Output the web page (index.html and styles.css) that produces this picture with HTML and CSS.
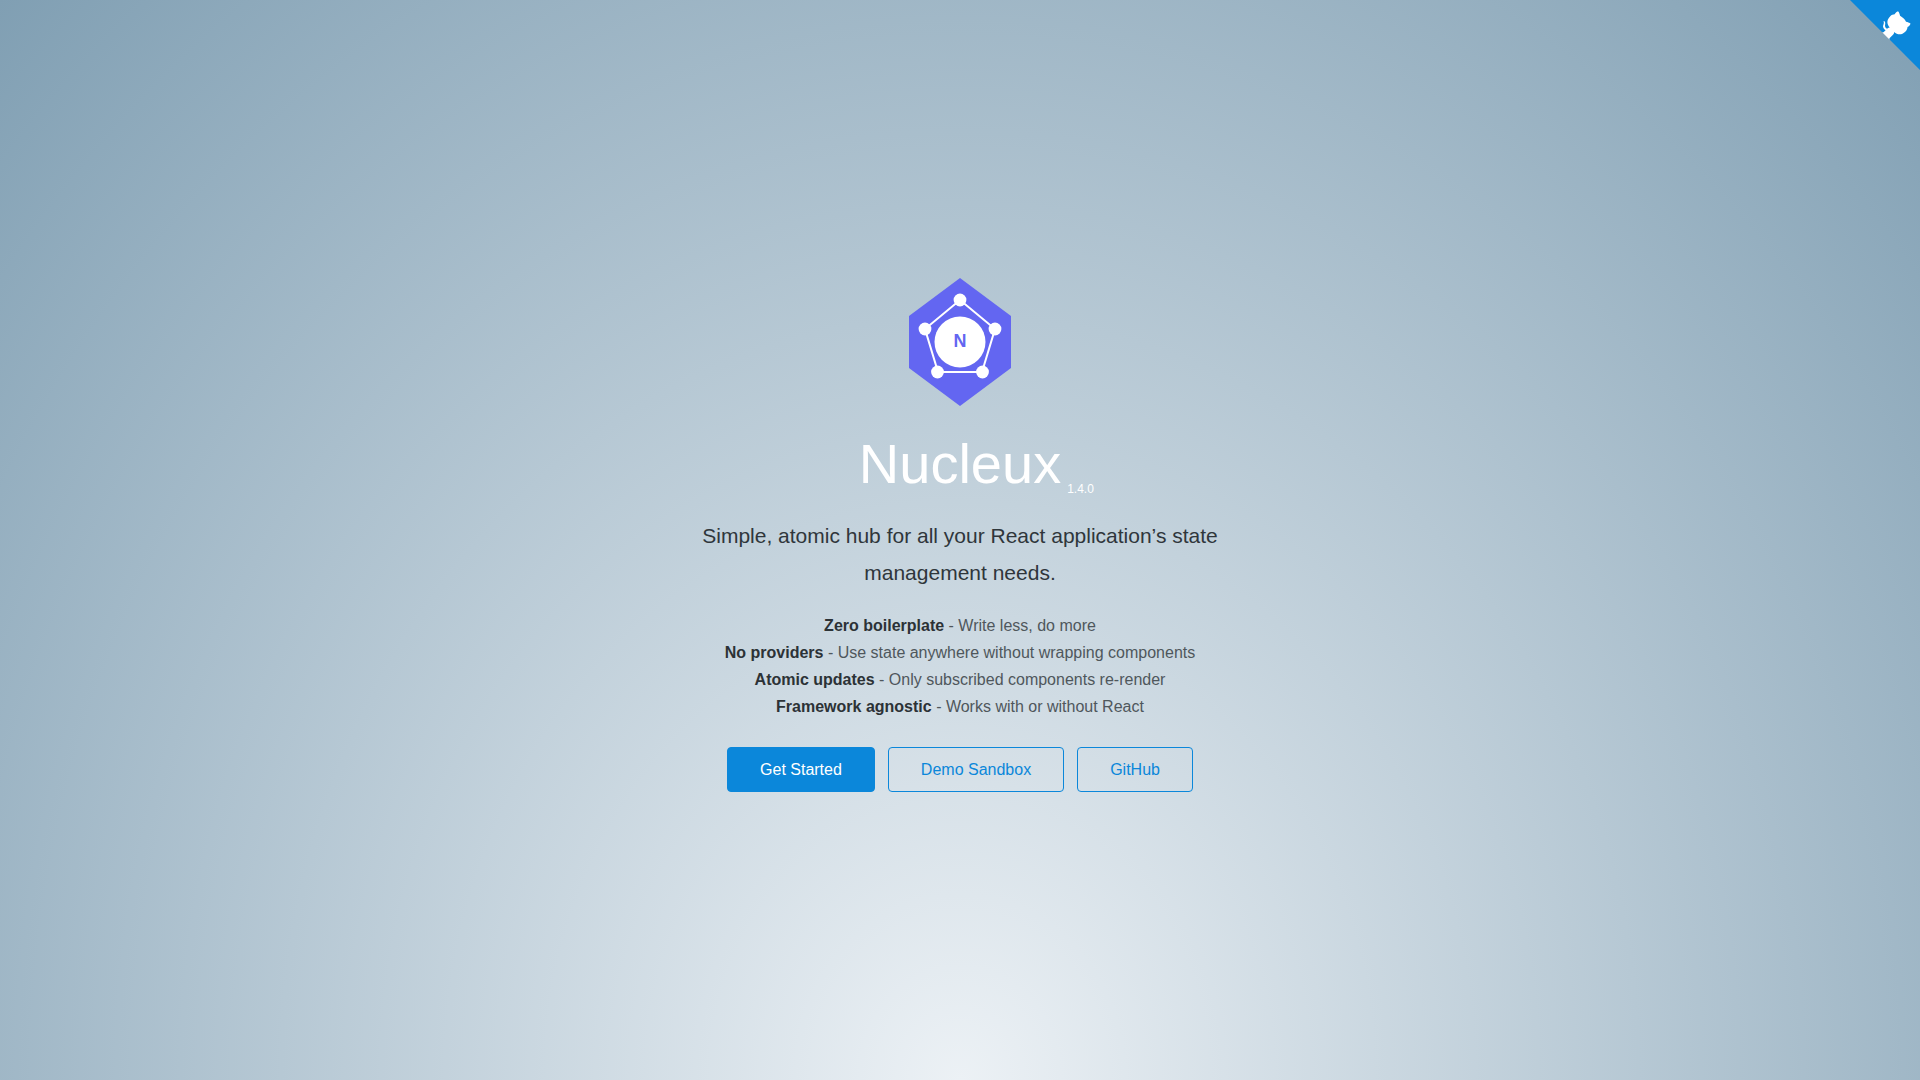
FILE: index.html
```html
<!DOCTYPE html>
<html lang="en">
<head>
    <meta charset="UTF-8">
    <meta name="viewport" content="width=device-width, initial-scale=1.0">
    <title>Nucleux</title>
    <link rel="stylesheet" href="styles.css">
</head>
<body>
    <a href="https://github.com" class="github-corner" aria-label="View source on GitHub">
        <svg viewBox="0 0 250 250" aria-hidden="true">
            <path d="M0,0 L115,115 L130,115 L142,142 L250,250 L250,0 Z"></path>
            <path class="octo" d="M128.3,109.0 C113.8,99.7 119.0,89.6 119.0,89.6 C122.0,82.7 120.5,78.6 120.5,78.6 C119.2,72.0 123.4,76.3 123.4,76.3 C127.3,80.9 125.5,87.3 125.5,87.3 C122.9,97.6 130.6,101.9 134.4,103.2"></path>
            <path class="octo" d="M115.0,115.0 C114.9,115.1 118.7,116.5 119.8,115.4 L133.7,101.6 C136.9,99.2 139.9,98.4 142.2,98.6 C133.8,88.0 127.5,74.4 143.8,58.0 C148.5,53.4 154.0,51.2 159.7,51.0 C160.3,49.4 163.2,43.6 171.4,40.1 C171.4,40.1 176.1,42.5 178.8,56.2 C183.1,58.6 187.2,61.8 190.9,65.4 C194.5,69.0 197.7,73.2 200.1,77.6 C213.8,80.2 216.3,84.9 216.3,84.9 C212.7,93.1 206.9,96.0 205.4,96.6 C205.1,102.4 203.0,107.8 198.3,112.5 C181.9,128.9 168.3,122.5 157.7,114.1 C157.9,116.9 156.7,120.9 152.7,124.9 L141.0,136.5 C139.8,137.7 141.6,141.9 141.8,141.8 Z"></path>
        </svg>
    </a>

    <main class="cover">
        <div class="cover-main">
            <svg class="logo" viewBox="0 0 128 128" role="img" aria-label="Nucleux logo">
                <polygon points="64,0 115,38 115,90 64,128 13,90 13,38" fill="#6366f1"></polygon>
                <polygon points="64,22 99,51 86,94 42,94 29,51" fill="none" stroke="#fff" stroke-width="2"></polygon>
                <g fill="#fff">
                    <circle cx="64" cy="64" r="25.5"></circle>
                    <circle cx="64" cy="22" r="6.4"></circle>
                    <circle cx="99" cy="51" r="6.4"></circle>
                    <circle cx="86.5" cy="94" r="6.4"></circle>
                    <circle cx="41.5" cy="94" r="6.4"></circle>
                    <circle cx="29" cy="51" r="6.4"></circle>
                </g>
                <text class="logo-letter" x="64" y="69" text-anchor="middle">N</text>
            </svg>

            <h1><span class="name">Nucleux<small>1.4.0</small></span></h1>

            <p class="tagline">Simple, atomic hub for all your React application’s state management needs.</p>

            <ul class="features">
                <li><strong>Zero boilerplate</strong> - Write less, do more</li>
                <li><strong>No providers</strong> - Use state anywhere without wrapping components</li>
                <li><strong>Atomic updates</strong> - Only subscribed components re-render</li>
                <li><strong>Framework agnostic</strong> - Works with or without React</li>
            </ul>

            <div class="buttons">
                <a href="#/getting-started" class="primary">Get Started</a>
                <a href="#/demo">Demo Sandbox</a>
                <a href="https://github.com">GitHub</a>
            </div>
        </div>
    </main>
</body>
</html>
```

FILE: styles.css
```css
* {
    box-sizing: border-box;
}

body {
    margin: 0;
    font-family: "Liberation Sans", Arial, sans-serif;
    font-size: 16px;
    color: #505d6b;
}

a {
    text-decoration: none;
}

.github-corner {
    position: absolute;
    top: 0;
    right: 0;
}

.github-corner svg {
    display: block;
    width: 70px;
    height: 70px;
    fill: #0b87da;
}

.github-corner .octo {
    fill: #fff;
}

.cover {
    display: flex;
    align-items: center;
    justify-content: center;
    min-height: 100vh;
    padding: 0 16px 10px;
    background: radial-gradient(ellipse at bottom, #ecf1f5, #809fb3);
    text-align: center;
}

.cover-main {
    max-width: 544px;
    display: flex;
    flex-direction: column;
    align-items: center;
}

.logo {
    width: 128px;
    height: 128px;
}

.logo-letter {
    font-size: 18px;
    font-weight: bold;
    fill: #6366f1;
}

h1 {
    margin: 23px 0 18px;
    font-size: 56px;
    font-weight: 300;
    line-height: 70px;
    color: #fff;
}

.name {
    position: relative;
}

.name small {
    position: absolute;
    bottom: -1px;
    left: calc(100% + 6px);
    font-size: 12px;
    line-height: 14px;
}

.tagline {
    margin: 0 0 21px;
    font-size: 21px;
    line-height: 37px;
    color: #2f363b;
}

.features {
    margin: 0 0 27px;
    padding: 0;
    list-style: none;
    line-height: 27px;
    color: #4f575c;
}

.features strong {
    color: #2c3236;
}

.buttons {
    display: flex;
    flex-wrap: wrap;
    justify-content: center;
    gap: 13px;
}

.buttons a {
    padding: 0 32px;
    border: 1px solid #0b87da;
    border-radius: 4px;
    line-height: 43px;
    color: #0b87da;
}

.buttons .primary {
    background-color: #0b87da;
    color: #fff;
}
```
